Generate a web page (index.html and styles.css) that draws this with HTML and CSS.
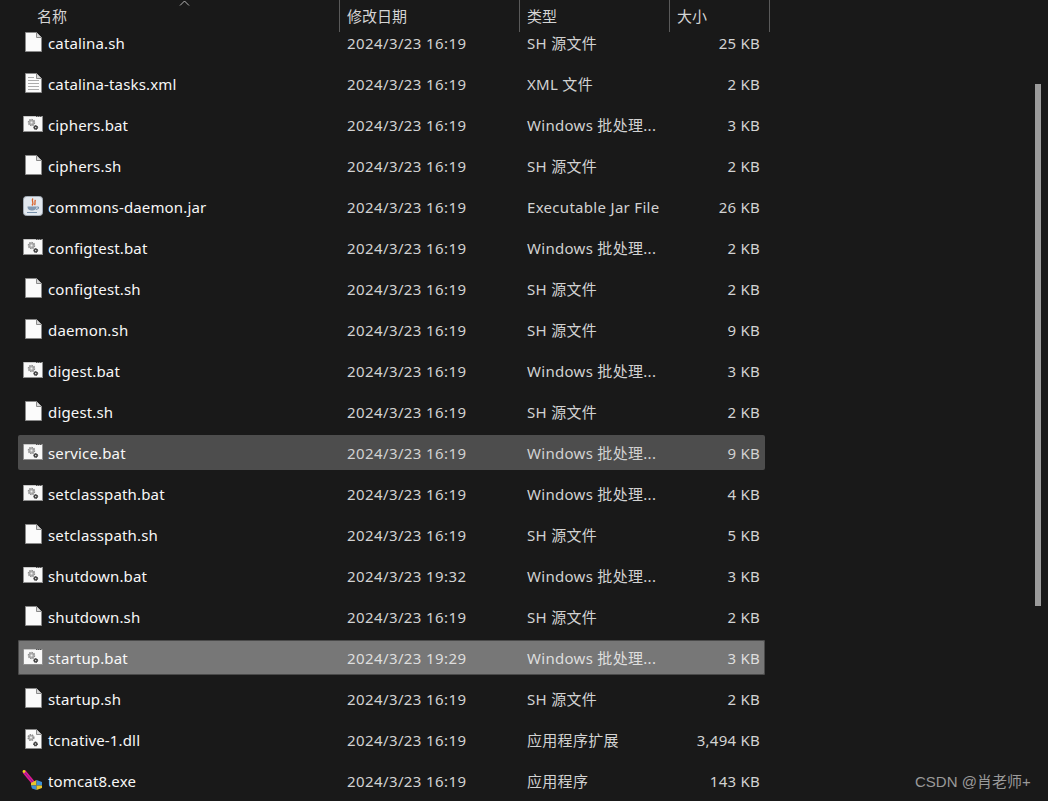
FILE: index.html
```html
<!DOCTYPE html>
<html lang="zh-CN">
<head>
<meta charset="utf-8">
<title>文件列表</title>
<link rel="stylesheet" href="styles.css">
</head>
<body>
<svg class="defs" width="0" height="0" aria-hidden="true">
  <defs>
    <symbol id="i-file" viewBox="0 0 24 24">
      <path d="M3.5 2.5H14.5L19.5 7.5V21.5H3.5Z" fill="#fbfbfb" stroke="#8a8a8a"/>
      <path d="M14.5 2.5V7.5H19.5" fill="#d8d8d8" stroke="#8a8a8a"/>
    </symbol>
    <symbol id="i-text" viewBox="0 0 24 24">
      <path d="M3.5 2.5H14.5L19.5 7.5V21.5H3.5Z" fill="#fbfbfb" stroke="#8a8a8a"/>
      <path d="M14.5 2.5V7.5H19.5" fill="#d8d8d8" stroke="#8a8a8a"/>
      <path d="M6 6.5H12M6 9.5H17M6 12.5H17M6 15.5H17M6 18.5H17" stroke="#ababab" fill="none"/>
    </symbol>
    <symbol id="i-gear" viewBox="0 0 24 24">
      <rect x="1.5" y="4.5" width="19" height="15" fill="#f8f8f8" stroke="#8f8f8f"/>
      <path d="M2 4.5H14" stroke="#c8c8c8"/>
      <path d="M14 4.5H20" stroke="#555" stroke-dasharray="1 1"/>
      <circle cx="9.5" cy="10.5" r="3" fill="#b0b0b0" stroke="#8e8e8e" stroke-width="1.5" stroke-dasharray="1.4 .9"/>
      <circle cx="9.5" cy="10.5" r="1" fill="#f0f0f0"/>
      <circle cx="13.7" cy="15.5" r="2" fill="#454545" stroke="#333" stroke-dasharray="1 .6"/>
      <circle cx="13.7" cy="15.5" r=".7" fill="#ddd"/>
    </symbol>
    <symbol id="i-dll" viewBox="0 0 24 24">
      <path d="M3.5 2.5H14.5L19.5 7.5V21.5H3.5Z" fill="#fbfbfb" stroke="#8a8a8a"/>
      <path d="M14.5 2.5V7.5H19.5" fill="#d8d8d8" stroke="#8a8a8a"/>
      <circle cx="9" cy="10.5" r="2.8" fill="#b0b0b0" stroke="#8e8e8e" stroke-width="1.5" stroke-dasharray="1.4 .9"/>
      <circle cx="9" cy="10.5" r="1" fill="#f0f0f0"/>
      <circle cx="13.5" cy="17" r="2" fill="#454545" stroke="#333" stroke-dasharray="1 .6"/>
      <circle cx="13.5" cy="17" r=".7" fill="#ddd"/>
    </symbol>
    <symbol id="i-jar" viewBox="0 0 24 24">
      <rect x="1.5" y="2.5" width="19" height="19" rx="3" fill="#e2e8ef" stroke="#a3acb6"/>
      <path d="M11 4.5C8.5 7 13 8 10 11.5M13.5 6C12 8 14 9 12.5 11" stroke="#d9622b" stroke-width="1.3" fill="none"/>
      <path d="M5.5 12.5H14.5C14.5 15.5 12.5 16.5 10 16.5S5.5 15.5 5.5 12.5Z" fill="#8198b2"/>
      <path d="M14.5 13H16.5V14.5L14 15.5M5 18.5H15" stroke="#7690ab" fill="none"/>
    </symbol>
    <symbol id="i-exe" viewBox="0 0 24 24">
      <path d="M2 3.5L11.5 15" stroke="#e01a8c" stroke-width="3.6"/>
      <path d="M2.5 4L11.5 15" stroke="#7a1fa0" stroke-width="1"/>
      <circle cx="2" cy="3.5" r="1.4" fill="#e7d21a"/>
      <path d="M9 15L14.5 12V17.5H9Z" fill="#e8c52a"/>
      <path d="M14.5 12L20 14V17.5H14.5Z" fill="#3d8fd6"/>
      <path d="M9 17.5H14.5V22L10 20.5Z" fill="#3d8fd6"/>
      <path d="M14.5 17.5H20V20L14.5 22Z" fill="#e8c52a"/>
    </symbol>
  </defs>
</svg>

<div class="explorer">
  <header class="head">
    <div class="hcell name">名称<svg class="sort" width="11" height="6" viewBox="0 0 11 6"><path d="M1 5.5L5.5 1L10 5.5" fill="none" stroke="#b5b5b5"/></svg></div>
    <div class="hcell date">修改日期</div>
    <div class="hcell type">类型</div>
    <div class="hcell size">大小</div>
  </header>
  <div class="list">
    <div class="row"><span class="fname"><svg class="ico"><use href="#i-file"/></svg>catalina.sh</span><span class="fdate">2024/3/23 16:19</span><span class="ftype">SH 源文件</span><span class="fsize">25 KB</span></div>
    <div class="row"><span class="fname"><svg class="ico"><use href="#i-text"/></svg>catalina-tasks.xml</span><span class="fdate">2024/3/23 16:19</span><span class="ftype">XML 文件</span><span class="fsize">2 KB</span></div>
    <div class="row"><span class="fname"><svg class="ico"><use href="#i-gear"/></svg>ciphers.bat</span><span class="fdate">2024/3/23 16:19</span><span class="ftype">Windows 批处理...</span><span class="fsize">3 KB</span></div>
    <div class="row"><span class="fname"><svg class="ico"><use href="#i-file"/></svg>ciphers.sh</span><span class="fdate">2024/3/23 16:19</span><span class="ftype">SH 源文件</span><span class="fsize">2 KB</span></div>
    <div class="row"><span class="fname"><svg class="ico"><use href="#i-jar"/></svg>commons-daemon.jar</span><span class="fdate">2024/3/23 16:19</span><span class="ftype">Executable Jar File</span><span class="fsize">26 KB</span></div>
    <div class="row"><span class="fname"><svg class="ico"><use href="#i-gear"/></svg>configtest.bat</span><span class="fdate">2024/3/23 16:19</span><span class="ftype">Windows 批处理...</span><span class="fsize">2 KB</span></div>
    <div class="row"><span class="fname"><svg class="ico"><use href="#i-file"/></svg>configtest.sh</span><span class="fdate">2024/3/23 16:19</span><span class="ftype">SH 源文件</span><span class="fsize">2 KB</span></div>
    <div class="row"><span class="fname"><svg class="ico"><use href="#i-file"/></svg>daemon.sh</span><span class="fdate">2024/3/23 16:19</span><span class="ftype">SH 源文件</span><span class="fsize">9 KB</span></div>
    <div class="row"><span class="fname"><svg class="ico"><use href="#i-gear"/></svg>digest.bat</span><span class="fdate">2024/3/23 16:19</span><span class="ftype">Windows 批处理...</span><span class="fsize">3 KB</span></div>
    <div class="row"><span class="fname"><svg class="ico"><use href="#i-file"/></svg>digest.sh</span><span class="fdate">2024/3/23 16:19</span><span class="ftype">SH 源文件</span><span class="fsize">2 KB</span></div>
    <div class="row hover"><span class="fname"><svg class="ico"><use href="#i-gear"/></svg>service.bat</span><span class="fdate">2024/3/23 16:19</span><span class="ftype">Windows 批处理...</span><span class="fsize">9 KB</span></div>
    <div class="row"><span class="fname"><svg class="ico"><use href="#i-gear"/></svg>setclasspath.bat</span><span class="fdate">2024/3/23 16:19</span><span class="ftype">Windows 批处理...</span><span class="fsize">4 KB</span></div>
    <div class="row"><span class="fname"><svg class="ico"><use href="#i-file"/></svg>setclasspath.sh</span><span class="fdate">2024/3/23 16:19</span><span class="ftype">SH 源文件</span><span class="fsize">5 KB</span></div>
    <div class="row"><span class="fname"><svg class="ico"><use href="#i-gear"/></svg>shutdown.bat</span><span class="fdate">2024/3/23 19:32</span><span class="ftype">Windows 批处理...</span><span class="fsize">3 KB</span></div>
    <div class="row"><span class="fname"><svg class="ico"><use href="#i-file"/></svg>shutdown.sh</span><span class="fdate">2024/3/23 16:19</span><span class="ftype">SH 源文件</span><span class="fsize">2 KB</span></div>
    <div class="row selected"><span class="fname"><svg class="ico"><use href="#i-gear"/></svg>startup.bat</span><span class="fdate">2024/3/23 19:29</span><span class="ftype">Windows 批处理...</span><span class="fsize">3 KB</span></div>
    <div class="row"><span class="fname"><svg class="ico"><use href="#i-file"/></svg>startup.sh</span><span class="fdate">2024/3/23 16:19</span><span class="ftype">SH 源文件</span><span class="fsize">2 KB</span></div>
    <div class="row"><span class="fname"><svg class="ico"><use href="#i-dll"/></svg>tcnative-1.dll</span><span class="fdate">2024/3/23 16:19</span><span class="ftype">应用程序扩展</span><span class="fsize">3,494 KB</span></div>
    <div class="row"><span class="fname"><svg class="ico"><use href="#i-exe"/></svg>tomcat8.exe</span><span class="fdate">2024/3/23 16:19</span><span class="ftype">应用程序</span><span class="fsize">143 KB</span></div>
  </div>
</div>
<div class="scrollbar"></div>
<div class="watermark">CSDN @肖老师+</div>
</body>
</html>
```
FILE: styles.css
```css
html, body {
  margin: 0;
  padding: 0;
  width: 1048px;
  height: 801px;
  overflow: hidden;
  background: #191919;
}
body {
  position: relative;
  font-family: "Noto Sans", "Noto Sans CJK SC", sans-serif;
  font-size: 15px;
  color: #f7f7f7;
}
.defs { position: absolute; }
.head {
  display: flex;
  height: 32px;
  width: 770px;
  color: #d4d4d4;
}
.hcell {
  position: relative;
  box-sizing: border-box;
  border-right: 1px solid #5a5a5a;
  padding-top: 5px;
  line-height: 22px;
  padding-left: 7px;
}
.hcell.name { width: 340px; padding-left: 37px; }
.hcell.date { width: 180px; }
.hcell.type { width: 150px; }
.hcell.size { width: 100px; }
.sort { position: absolute; left: 179px; top: 0; }
.list {
  display: flex;
  flex-direction: column;
  gap: 6px;
  margin-top: -7px;
  margin-left: 18px;
  width: 747px;
}
.row {
  display: flex;
  align-items: center;
  flex: none;
  height: 35px;
  border-radius: 2px;
}
.row.hover { background: #4d4d4d; }
.row.selected { background: #777777; box-shadow: inset 0 0 0 1px #4a4a4a; }
.fname { display: flex; align-items: center; width: 329px; gap: 2px; padding-left: 4px; box-sizing: border-box; letter-spacing: .15px; }
.ico { width: 24px; height: 24px; flex: none; margin-top: -1px; }
.fdate { width: 180px; color: #d2d2d2; letter-spacing: .4px; }
.ftype { width: 150px; color: #d2d2d2; letter-spacing: .3px; }
.fsize { width: 83px; text-align: right; color: #d2d2d2; letter-spacing: .25px; }
.selected .fdate, .selected .ftype, .selected .fsize { color: #dedede; }
.scrollbar {
  position: absolute;
  left: 1035px;
  top: 84px;
  width: 6px;
  height: 522px;
  background: #9b9b9b;
}
.watermark {
  position: absolute;
  left: 915px;
  top: 772px;
  font-family: "Liberation Sans", "Noto Sans CJK SC", sans-serif;
  font-size: 15px;
  line-height: 20px;
  color: #9a9a9a;
}
```
